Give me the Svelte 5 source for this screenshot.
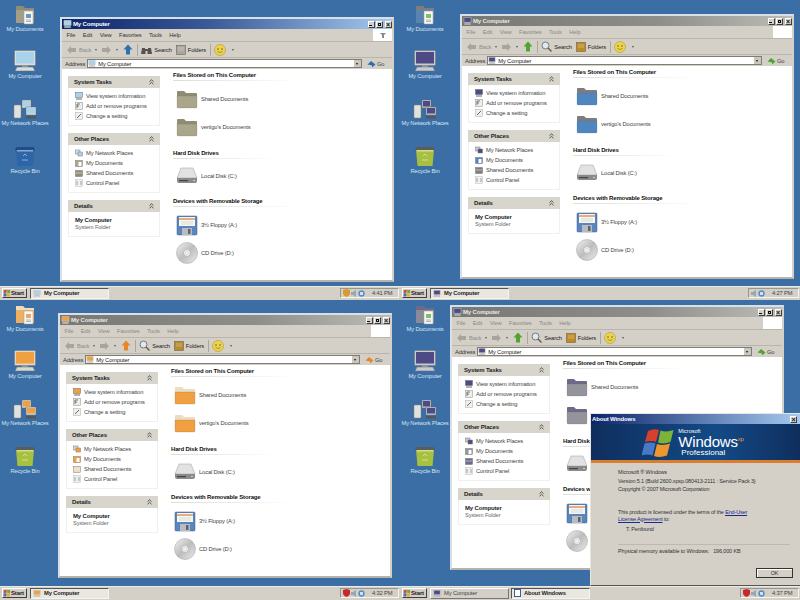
<script lang="ts">
	// Four XP desktops in a 2x2 collage, each with its own icon theme.
	const desks = [
		{
			winX: 60, winY: 17, active: true, clock: '4:41 PM', tray: 'amber', search: 'binoculars',
			screen: '#a9d3ea', case: '#d8dde0', folder: '#a9a68c', tab: '#8f8c76', arrow: '#2f6fb0', folders: '#a8a8a0', bin: '#2c65a8', binLid: '#1f4f8a'
		},
		{
			winX: 60, winY: 14, active: false, clock: '4:27 PM', tray: 'none', search: 'lens',
			screen: '#4d4a86', case: '#c9c9d0', folder: '#4f86c0', tab: '#7d7d80', arrow: '#4fa52d', folders: '#c08a20', bin: '#a8c040', binLid: '#5c5c58'
		},
		{
			winX: 58, winY: 13, active: false, clock: '4:32 PM', tray: 'red', search: 'lens',
			screen: '#f0a040', case: '#d8d8d0', folder: '#f0a040', tab: '#eedcc0', arrow: '#e8842a', folders: '#b88a28', bin: '#a8c040', binLid: '#5c5c58'
		},
		{
			winX: 50, winY: 5, active: false, clock: '4:37 PM', tray: 'red', search: 'lens',
			screen: '#4d4a86', case: '#c9c9d0', folder: '#94949c', tab: '#6d6a8a', arrow: '#4fa52d', folders: '#c08a20', bin: '#a8c040', binLid: '#5c5c58'
		}
	];

	const desktopIcons = ['My Documents', 'My Computer', 'My Network Places', 'Recycle Bin'];
	const menus = ['File', 'Edit', 'View', 'Favorites', 'Tools', 'Help'];
	const systemTasks = ['View system information', 'Add or remove programs', 'Change a setting'];
	const otherPlaces = ['My Network Places', 'My Documents', 'Shared Documents', 'Control Panel'];
</script>

{#snippet monitor(d, w = 24, h = 22)}
	<svg width={w} height={h} viewBox="0 0 24 22">
		<rect x="1.5" y=".5" width="21" height="15" rx="1" fill={d.case} stroke="#77797c" stroke-width=".6" />
		<rect x="3" y="2" width="18" height="11.5" fill={d.screen} />
		<rect x="9" y="15.500" width="6" height="1.500" fill="#a0a2a4" />
		<path d="M4 17h16l2 4H2z" fill={d.case} stroke="#66686a" stroke-width=".5" />
	</svg>
{/snippet}

{#snippet documents(d)}
	<svg width="24" height="22" viewBox="0 0 24 22">
		<path d="M3 3h7l2 2h9v15H3z" fill={d.tab} />
		<path d="M3 7h18v13H3z" fill={d.folder} opacity=".75" />
		<rect x="11" y="8" width="9" height="13" fill="#f6f6f2" stroke="#9a9a96" stroke-width=".5" />
		<rect x="13" y="11" width="5" height="4" fill={d.arrow} opacity=".7" />
		<path d="M13 17h5M13 18.5h5" stroke="#888" stroke-width=".6" />
	</svg>
{/snippet}

{#snippet network(d)}
	<svg width="24" height="22" viewBox="0 0 24 22">
		<rect x="1" y="7" width="7" height="13" rx="1" fill="#e2e2dc" stroke="#85857f" stroke-width=".5" />
		<rect x="9" y="2" width="9" height="8" fill={d.case} stroke="#66686a" stroke-width=".5" />
		<rect x="10" y="3" width="7" height="5.5" fill={d.screen} />
		<rect x="13" y="9" width="10" height="8" fill={d.case} stroke="#66686a" stroke-width=".5" />
		<rect x="14" y="10" width="8" height="5.5" fill={d.screen} />
		<rect x="13" y="18" width="10" height="2.5" fill="#55575a" />
	</svg>
{/snippet}

{#snippet recycle(d)}
	<svg width="24" height="22" viewBox="0 0 24 22">
		<path d="M3 2h18l1 4H2z" fill={d.binLid} />
		<path d="M3 5h18l-1.5 16h-15z" fill={d.bin} />
		<path d="M4 5h16v1.5H4z" fill="#ffffff" opacity=".45" />
		<path d="M10 11l2-2 2 2M9 15h6" stroke="#ffffff" stroke-width=".8" fill="none" opacity=".6" />
	</svg>
{/snippet}

{#snippet folder(d)}
	<svg width="22" height="20" viewBox="0 0 22 20">
		<path d="M1 3q0-1 1-1h6l2 2h10q1 0 1 1v12H1z" fill={d.tab} />
		<path d="M1 7h20v11q0 1-1 1H2q-1 0-1-1z" fill={d.folder} stroke="#6a6a5e" stroke-opacity=".4" stroke-width=".5" />
	</svg>
{/snippet}

{#snippet drive()}
	<svg width="22" height="19" viewBox="0 0 22 19">
		<path d="M5 2h12l4 10H1z" fill="#e2e2e2" stroke="#9a9a9a" stroke-width=".5" />
		<path d="M1 12h20v3q0 2-2 2H3q-2 0-2-2z" fill="#8a8a8a" />
		<rect x="3" y="14" width="9" height="1.2" fill="#444" />
		<circle cx="18" cy="14.5" r=".8" fill="#ddd" />
	</svg>
{/snippet}

{#snippet floppy()}
	<svg width="22" height="21" viewBox="0 0 22 21">
		<rect x="1" y="1" width="20" height="19" rx="1" fill="#5b86bd" stroke="#3c5f8e" stroke-width=".5" />
		<rect x="3" y="2" width="16" height="9" fill="#f6f6f0" />
		<path d="M3 4h16" stroke="#e07a3a" stroke-width="1.2" />
		<path d="M5 7h12M5 9h12" stroke="#c0c0c0" stroke-width=".5" />
		<rect x="6" y="13" width="10" height="7" fill="#b8bcc2" />
		<rect x="12" y="14" width="2.5" height="5" fill="#5b6470" />
	</svg>
{/snippet}

{#snippet disc()}
	<svg width="22" height="22" viewBox="0 0 22 22">
		<defs>
			<linearGradient id="cd" x1="0" y1="0" x2="1" y2="1">
				<stop offset="0" stop-color="#f2f2f2" />
				<stop offset=".5" stop-color="#bdbdbd" />
				<stop offset="1" stop-color="#ececec" />
			</linearGradient>
		</defs>
		<circle cx="11" cy="11" r="10.5" fill="url(#cd)" stroke="#a0a0a0" stroke-width=".5" />
		<circle cx="11" cy="11" r="3.4" fill="#f4f4f4" stroke="#999" stroke-width=".5" />
		<circle cx="11" cy="11" r="1.5" fill="#ffffff" stroke="#aaa" stroke-width=".4" />
	</svg>
{/snippet}

{#snippet chevrons()}
	<svg class="chev" width="5" height="6" viewBox="0 0 5 6">
		<path d="M.5 2.6 2.5.8l2 1.8M.5 5.2l2-1.8 2 1.8" fill="none" stroke="#333" stroke-width=".8" />
	</svg>
{/snippet}

{#snippet flag(w = 8)}
	<svg width={w} height={w} viewBox="0 0 10 10">
		<path d="M1 1.5 4.6 1 4.4 4.6 .8 5z" fill="#d8432c" />
		<path d="M5.4 1 9 1.5 8.8 5 5.2 4.6z" fill="#6aa83a" />
		<path d="M.8 5.6 4.4 5.2 4.2 9 .6 9.4z" fill="#3f6fc0" />
		<path d="M5.2 5.2 8.8 5.6 8.6 9.4 5 9z" fill="#eda82c" />
	</svg>
{/snippet}

{#snippet taskIcon(d, kind)}
	<svg class="tico" width="8" height="8" viewBox="0 0 8 8">
		{#if kind === 0}
			<rect x=".5" y=".5" width="7" height="5" fill={d.screen} stroke="#66686a" stroke-width=".5" />
			<path d="M1 7h6" stroke="#66686a" />
		{:else if kind === 1}
			<rect x=".5" y=".5" width="7" height="7" fill="#ededea" stroke="#888" stroke-width=".5" />
			<path d="M2 2h3M2 2v4M2 4h2" stroke="#555" stroke-width=".8" fill="none" />
		{:else if kind === 2}
			<rect x=".5" y=".5" width="7" height="7" fill="#efefec" stroke="#aaa" stroke-width=".5" />
			<path d="M2 6l4-4" stroke="#666" />
		{:else if kind === 3}
			<rect x=".5" y="1" width="4.5" height="4" fill={d.case} stroke="#777" stroke-width=".5" />
			<rect x="3" y="3" width="4.5" height="4" fill={d.screen} stroke="#777" stroke-width=".5" />
		{:else if kind === 4}
			<rect x=".5" y="1.5" width="7" height="6" fill={d.folder} stroke="#666" stroke-width=".4" />
			<rect x="3.5" y="3" width="3" height="4" fill="#fff" />
		{:else if kind === 5}
			<rect x=".5" y="1.5" width="7" height="6" fill={d.tab} stroke="#666" stroke-width=".4" />
			<path d="M1 4h6" stroke="#fff" stroke-width=".5" />
		{:else}
			<rect x=".5" y=".5" width="7" height="7" fill="#f0f0ee" stroke="#bbb" stroke-width=".5" />
			<path d="M2 2v4M6 2v4" stroke="#889" stroke-width=".8" />
		{/if}
	</svg>
{/snippet}

{#snippet nav(d, label)}
	<svg width="11" height="10" viewBox="0 0 11 10">
		{#if label === 'back'}
			<path d="M1 5 5 1v2h5v4H5v2z" fill="#a6a69e" />
		{:else}
			<path d="M10 5 6 1v2H1v4h5v2z" fill="#a6a69e" />
		{/if}
	</svg>
{/snippet}

{#snippet toolbar(d)}
	<div class="toolbar">
		<span class="tool dim">{@render nav(d, 'back')}<span>Back</span><i class="caret"></i></span>
		<span class="tool">{@render nav(d, 'fwd')}<i class="caret"></i></span>
		<svg class="up" width="10" height="11" viewBox="0 0 10 11"><path d="M5 .5 9.5 5.5H7V10.500H3V5.500H.5z" fill={d.arrow} /></svg>
		<span class="sep"></span>
		<span class="tool">
			{#if d.search === 'binoculars'}
				<svg width="11" height="10" viewBox="0 0 11 10"><path d="M1 3h3v1h3V3h3l1 6H6.500V6h-2v3H0z" fill="#53534f" /></svg>
			{:else}
				<svg width="11" height="11" viewBox="0 0 11 11"><circle cx="4.500" cy="4.500" r="3.500" fill="#dfe8ee" stroke="#77797c" /><path d="m7 7 3.500 3.500" stroke="#6b5a3a" stroke-width="1.400" /></svg>
			{/if}
			<span>Search</span>
		</span>
		<span class="tool">
			<svg width="10" height="10" viewBox="0 0 10 10"><rect x=".5" y=".5" width="9" height="9" fill={d.folders} stroke="#66645a" stroke-width=".6" /><path d="M2 3h6M2 5h6" stroke="#fff" stroke-opacity=".6" stroke-width=".6" /></svg>
			<span>Folders</span>
		</span>
		<span class="sep"></span>
		<svg width="12" height="12" viewBox="0 0 12 12">
			<circle cx="6" cy="6" r="5.500" fill="#f0d24a" stroke="#a89a3a" stroke-width=".6" />
			<path d="M3 5h2M7 5h2" stroke="#5a6a2a" stroke-width=".9" />
			<path d="M3.500 7.500q2.500 2 5 0" stroke="#7a7a2a" stroke-width=".7" fill="none" />
		</svg>
		<i class="caret"></i>
	</div>
{/snippet}

{#snippet winButtons()}
	<span class="wbtn"><i class="b-min"></i></span>
	<span class="wbtn"><i class="b-max"></i></span>
	<span class="wbtn x">×</span>
{/snippet}

{#snippet tile(name)}
	<span class="tile-name">{name}</span>
{/snippet}

{#snippet explorer(d)}
	<div class="window" style="left:{d.winX}px;top:{d.winY}px">
		<div class="title" class:active={d.active}>
			{@render monitor(d, 9, 8)}
			<span class="title-text">My Computer</span>
			<span class="title-btns">{@render winButtons()}</span>
		</div>
		<div class="menubar" class:dim-menu={!d.active}>
			{#each menus as m}<span>{m}</span>{/each}
			<span class="throbber">
				{#if d.active}<svg width="6" height="7" viewBox="0 0 6 7"><path d="M0 1h6L4 3v3H2V3z" fill="#8a8a8a" /></svg>{/if}
			</span>
		</div>
		{@render toolbar(d)}
		<div class="addressbar">
			<span class="addr-label">Address</span>
			<span class="addr-field">
				{@render monitor(d, 8, 7)}
				<span>My Computer</span>
				<span class="addr-drop"></span>
			</span>
			<span class="go">
				<svg width="9" height="8" viewBox="0 0 9 8"><path d="M.5 4.500 4 1l4.500 3.500L5 7.500V5.500z" fill={d.arrow} /></svg>
				Go
			</span>
		</div>
		<div class="content">
			<div class="side">
				<section class="box">
					<h4>System Tasks{@render chevrons()}</h4>
					<ul>
						{#each systemTasks as t, i}
							<li>{@render taskIcon(d, i)}{t}</li>
						{/each}
					</ul>
				</section>
				<section class="box">
					<h4>Other Places{@render chevrons()}</h4>
					<ul>
						{#each otherPlaces as t, i}
							<li>{@render taskIcon(d, i + 3)}{t}</li>
						{/each}
					</ul>
				</section>
				<section class="box">
					<h4>Details{@render chevrons()}</h4>
					<div class="details"><b>My Computer</b><span>System Folder</span></div>
				</section>
			</div>
			<div class="main">
				<h3>Files Stored on This Computer</h3>
				<div class="tile t-folder first">{@render folder(d)}{@render tile('Shared Documents')}</div>
				<div class="tile t-folder">{@render folder(d)}{@render tile("vertigo's Documents")}</div>
				<h3 class="gap">Hard Disk Drives</h3>
				<div class="tile t-drive">{@render drive()}{@render tile('Local Disk (C:)')}</div>
				<h3 class="gap2">Devices with Removable Storage</h3>
				<div class="tile t-floppy">{@render floppy()}{@render tile('3½ Floppy (A:)')}</div>
				<div class="tile t-cd">{@render disc()}{@render tile('CD Drive (D:)')}</div>
			</div>
		</div>
	</div>
{/snippet}

{#snippet about()}
	<div class="about">
		<div class="about-title">
			<span>About Windows</span>
			<span class="wbtn x">×</span>
		</div>
		<div class="banner">
			<svg width="34" height="29" viewBox="0 0 34 29">
				<path d="M6 3q6-3 11-1l-3 12q-5-2-11 0z" fill="#d9402c" />
				<path d="M18.500 2.500q6 2 13-.5l-3 12q-7 2.500-12.500.5z" fill="#7cb43a" />
				<path d="M2.500 15.500q6-2 11 0l-3 12q-5-2-11 0z" fill="#4a78c8" />
				<path d="M15 16q6 2 13-.5l-3 12q-7 2.500-13 .5z" fill="#f0962a" />
			</svg>
			<div class="wordmark">
				<small>Microsoft</small>
				<div class="ww">Windows<sup>xp</sup></div>
				<em>Professional</em>
			</div>
		</div>
		<div class="about-body">
			<p>Microsoft ® Windows<br />Version 5.1 (Build 2600.xpsp.080413-2111 : Service Pack 3)<br />Copyright © 2007 Microsoft Corporation</p>
			<p class="lic">This product is licensed under the terms of the <u>End-User<br />License Agreement</u> to:</p>
			<p class="owner">T. Penfound</p>
			<hr />
			<p>Physical memory available to Windows:&nbsp;&nbsp; 196,000 KB</p>
			<span class="ok">OK</span>
		</div>
	</div>
{/snippet}

<div class="collage">
	{#each desks as d, n}
		<div class="desk">
			<div class="screen">
				<div class="icons">
					{#each desktopIcons as label, i}
						<div class="dicon">
							{#if i === 0}{@render documents(d)}{:else if i === 1}{@render monitor(d)}{:else if i === 2}{@render network(d)}{:else}{@render recycle(d)}{/if}
							<span>{label}</span>
						</div>
					{/each}
				</div>
				{@render explorer(d)}
				{#if n === 3}{@render about()}{/if}
			</div>
			<div class="taskbar">
				<span class="start">{@render flag()}Start</span>
				<span class="task" class:pressed={n !== 3}>{@render monitor(d, 8, 7)}My Computer</span>
				{#if n === 3}
					<span class="task pressed about-task"><i class="mini-win"></i>About Windows</span>
				{/if}
				<span class="tray">
					{#if d.tray !== 'none'}
						<svg width="7" height="8" viewBox="0 0 7 8"><path d="M0 1 3.500 0 7 1v3q0 2.500-3.500 4Q0 6.500 0 4z" fill={d.tray === 'red' ? '#c8282c' : '#d89a30'} /></svg>
					{/if}
					<svg width="6" height="7" viewBox="0 0 6 7"><path d="M0 2h2l3-2v7L2 5H0z" fill="#9aa6b0" /></svg>
					<svg width="7" height="7" viewBox="0 0 7 7"><circle cx="3.500" cy="3.500" r="3.200" fill="#5a8ec8" /><path d="M2 2h3v3H2z" fill="#cfe0f0" /></svg>
					<span class="clock">{d.clock}</span>
				</span>
			</div>
		</div>
	{/each}
</div>

<style>
	:global(body) {
		margin: 0;
		background: #3a6ea5;
	}
	.collage {
		width: 800px;
		height: 600px;
		display: grid;
		grid-template-columns: 400px 400px;
		grid-template-rows: 300px 300px;
		overflow: hidden;
		font-family: 'Liberation Sans', Arial, sans-serif;
		font-size: 5.800px;
		letter-spacing: -0.150px;
		color: #222;
	}
	.desk {
		display: flex;
		flex-direction: column;
		min-width: 0;
	}
	.screen {
		flex: 1;
		position: relative;
		background: #3a6ea5;
	}
	.icons {
		display: flex;
		flex-direction: column;
		width: 50px;
	}
	.dicon {
		height: 47.4px;
		padding-top: 3px;
		box-sizing: border-box;
		display: flex;
		flex-direction: column;
		align-items: center;
		color: #d5e5f5;
		white-space: nowrap;
	}
	.dicon span {
		margin-top: 0.5px;
	}

	.window {
		position: absolute;
		width: 334px;
		height: 265px;
		box-sizing: border-box;
		display: flex;
		flex-direction: column;
		border: 2px solid #d8dfe6;
		border-right-color: #d4d0c8;
		border-bottom-color: #b5b3ac;
		background: #d4d0c8;
	}
	.title {
		height: 10px;
		display: flex;
		align-items: center;
		gap: 1px;
		padding-left: 1px;
		background: linear-gradient(90deg, #777774, #8e8e8a 60%, #bdbdb8);
		color: #e8e8e4;
		font-weight: bold;
		font-size: 6px;
		flex: none;
	}
	.title.active {
		background: linear-gradient(90deg, #0a246a, #3b5a98 45%, #a6caf0);
		color: #fff;
	}
	.title-btns {
		margin-left: auto;
		display: flex;
		gap: 1.500px;
		padding-right: 0.500px;
	}
	.wbtn {
		width: 7px;
		height: 7px;
		box-sizing: border-box;
		display: flex;
		align-items: center;
		justify-content: center;
		background: #d4d0c8;
		border: 1px solid;
		border-color: #fff #404040 #404040 #fff;
		position: relative;
		font-size: 7px;
		line-height: 1;
		color: #111;
		font-weight: bold;
	}
	.b-min {
		width: 3px;
		height: 1px;
		background: #111;
		align-self: flex-end;
		margin-bottom: 0.5px;
		margin-right: 1px;
	}
	.b-max {
		width: 3px;
		height: 3px;
		border: 1px solid #111;
		box-sizing: border-box;
	}
	.menubar {
		height: 13px;
		flex: none;
		display: flex;
		align-items: center;
		gap: 7.500px;
		padding-left: 4.500px;
		box-sizing: border-box;
		border-bottom: 1px solid #b8b5ac;
		color: #333;
	}
	.dim-menu {
		color: #8c8a82;
	}
	.throbber {
		margin-left: auto;
		width: 19px;
		height: 12px;
		background: #fff;
		display: flex;
		align-items: center;
		justify-content: center;
	}
	.toolbar {
		height: 16px;
		flex: none;
		display: flex;
		align-items: center;
		gap: 4px;
		padding-left: 4px;
		box-sizing: border-box;
		border-bottom: 1px solid #b8b5ac;
	}
	.tool {
		display: flex;
		align-items: center;
		gap: 2px;
	}
	.tool.dim span {
		color: #8f8d85;
	}
	.caret {
		width: 0;
		height: 0;
		border: 1.500px solid transparent;
		border-top: 2px solid #555;
		border-bottom: 0;
		margin-left: 2px;
	}
	.up {
		margin-left: 1px;
	}
	.sep {
		width: 1px;
		height: 12px;
		background: #aaa79e;
		margin: 0 -0.500px;
	}
	.addressbar {
		height: 11px;
		flex: none;
		display: flex;
		align-items: center;
		gap: 1px;
		box-sizing: border-box;
		padding-left: 2px;
	}
	.addr-label {
		padding: 0 1px;
		color: #333;
	}
	.addr-field {
		flex: 1;
		height: 9.500px;
		background: #fff;
		display: flex;
		align-items: center;
		gap: 2px;
		border: 1px solid #7f7d76;
		box-sizing: border-box;
		position: relative;
	}
	.addr-drop {
		margin-left: auto;
		width: 7px;
		height: 100%;
		background: #c9c6be;
		position: relative;
	}
	.addr-drop::after {
		content: '';
		position: absolute;
		left: 2px;
		top: 3px;
		border: 1.500px solid transparent;
		border-top: 2px solid #111;
		border-bottom: 0;
	}
	.go {
		width: 29px;
		display: flex;
		align-items: center;
		gap: 1px;
		padding-left: 4px;
		box-sizing: border-box;
		color: #444;
	}
	.content {
		flex: 1;
		background: #fff;
		display: flex;
		min-height: 0;
		padding-left: 6px;
	}
	.side {
		width: 92px;
		flex: none;
		padding-top: 7px;
		display: flex;
		flex-direction: column;
		gap: 7.500px;
	}
	.box {
		border: 1px solid #f0f0ec;
		border-top: 0;
	}
	.box h4 {
		margin: 0 -1px;
		height: 11.500px;
		padding: 0 6px;
		background: #d8d5cd;
		display: flex;
		align-items: center;
		justify-content: space-between;
		font-size: 6px;
		font-weight: bold;
		color: #222;
	}
	.box ul {
		list-style: none;
		margin: 0;
		padding: 3px 0 4px 6px;
	}
	.box li {
		height: 10px;
		display: flex;
		align-items: center;
		gap: 3px;
		color: #444;
		white-space: nowrap;
	}
	.tico {
		flex: none;
	}
	.details {
		display: flex;
		flex-direction: column;
		padding: 5px 0 5px 6px;
		line-height: 7px;
		color: #666;
	}
	.details b {
		color: #222;
		font-size: 6px;
	}
	.main {
		flex: 1;
		margin-left: 13px;
		padding-top: 2px;
	}
	.main h3 {
		margin: 0;
		font-size: 6px;
		font-weight: bold;
		color: #111;
		height: 10px;
		line-height: 9px;
		width: 127px;
		white-space: nowrap;
		background: linear-gradient(90deg, #dcdcd8, #ffffff) bottom / 100% 1px no-repeat;
	}
	.main h3.gap {
		margin-top: 8px;
		width: 105px;
	}
	.main h3.gap2 {
		margin-top: 12px;
	}
	.tile {
		display: flex;
		align-items: center;
		gap: 3px;
		padding-left: 3px;
		color: #444;
	}
	.t-folder {
		height: 28px;
	}
	.t-folder.first {
		margin-top: 4px;
	}
	.t-drive {
		height: 19px;
		margin-top: 7px;
	}
	.t-floppy {
		height: 24px;
		margin-top: 6px;
	}
	.t-cd {
		height: 24px;
		margin-top: 4px;
	}

	.about {
		position: absolute;
		left: 190px;
		top: 113px;
		width: 210px;
		height: 173px;
		box-sizing: border-box;
		background: #d4d0c8;
		border: 1px solid #e8e6e0;
		border-right: 0;
		border-bottom: 1px solid #555;
		display: flex;
		flex-direction: column;
		z-index: 2;
	}
	.about-title {
		height: 10px;
		flex: none;
		display: flex;
		align-items: center;
		justify-content: space-between;
		padding: 0 3px 0 1px;
		background: linear-gradient(90deg, #0a246a, #a6caf0);
		color: #fff;
		font-weight: bold;
		font-size: 6px;
	}
	.banner {
		height: 39px;
		flex: none;
		display: flex;
		align-items: center;
		justify-content: center;
		gap: 2px;
		padding-right: 5px;
		box-sizing: border-box;
		background: #123a6c;
		background-image: linear-gradient(90deg, #0f2e5e, #134a86 60%, #0f2e5e);
		border-bottom: 3px solid #d87e2e;
	}
	.wordmark {
		color: #fff;
		display: flex;
		flex-direction: column;
		line-height: 1;
		letter-spacing: 0;
	}
	.wordmark small {
		font-size: 5.500px;
		line-height: 6px;
	}
	.ww {
		font-size: 15px;
		line-height: 15px;
		letter-spacing: -0.200px;
	}
	.ww sup {
		font-size: 6px;
		color: #e89a3a;
		vertical-align: 6px;
		line-height: 0;
	}
	.wordmark em {
		font-style: normal;
		font-size: 8px;
		line-height: 8px;
		padding-left: 3px;
	}
	.about-body {
		flex: 1;
		padding: 5px 10px 0 27px;
		position: relative;
		font-size: 5.500px;
		line-height: 8.500px;
		color: #333;
	}
	.about-body p {
		margin: 0;
		white-space: nowrap;
	}
	.about-body u {
		color: #1a2a8a;
	}
	.about-body .lic {
		margin-top: 15px;
		line-height: 7px;
	}
	.about-body .owner {
		margin: 2px 0 0 8px;
	}
	.about-body hr {
		margin: 11px 0 2px;
		border: 0;
		border-top: 1px solid #bcb9b0;
	}
	.ok {
		position: absolute;
		right: 7px;
		bottom: 7px;
		width: 37px;
		height: 10px;
		box-sizing: border-box;
		border: 1px solid #333;
		box-shadow: inset 1px 1px 0 #fff;
		display: flex;
		align-items: center;
		justify-content: center;
	}

	.taskbar {
		height: 14px;
		flex: none;
		display: flex;
		align-items: center;
		gap: 3px;
		padding: 0 0 0 2px;
		background: #d4d0c8;
		box-shadow: inset 0 1px 0 #eceae4;
		position: relative;
		z-index: 1;
	}
	.start {
		width: 25px;
		height: 10px;
		box-sizing: border-box;
		display: flex;
		align-items: center;
		gap: 0;
		font-weight: bold;
		font-size: 6px;
		background: #d4d0c8;
		border: 1px solid;
		border-color: #fff #404040 #404040 #fff;
		overflow: hidden;
	}
	.task {
		width: 79px;
		height: 11px;
		box-sizing: border-box;
		display: flex;
		align-items: center;
		gap: 3px;
		padding-left: 2px;
		color: #444;
		background: #d4d0c8;
		border: 1px solid;
		border-color: #fff #777 #777 #fff;
	}
	.task.pressed {
		border-color: #555 #f4f4f0 #f4f4f0 #555;
		background: #e9e7e0;
		font-weight: bold;
		color: #222;
	}
	.about-task {
		margin-left: -1px;
	}
	.mini-win {
		width: 7px;
		height: 8px;
		background: #fff;
		border: 1px solid #3a5f9a;
		box-sizing: border-box;
		display: block;
	}
	.tray {
		margin-left: auto;
		margin-right: 1.500px;
		height: 10px;
		display: flex;
		align-items: center;
		gap: 1px;
		padding: 0 2px;
		border: 1px solid;
		border-color: #9a978f #f4f4f0 #f4f4f0 #9a978f;
		box-sizing: border-box;
	}
	.clock {
		margin: 0 3px 0 6px;
		color: #444;
	}
</style>
